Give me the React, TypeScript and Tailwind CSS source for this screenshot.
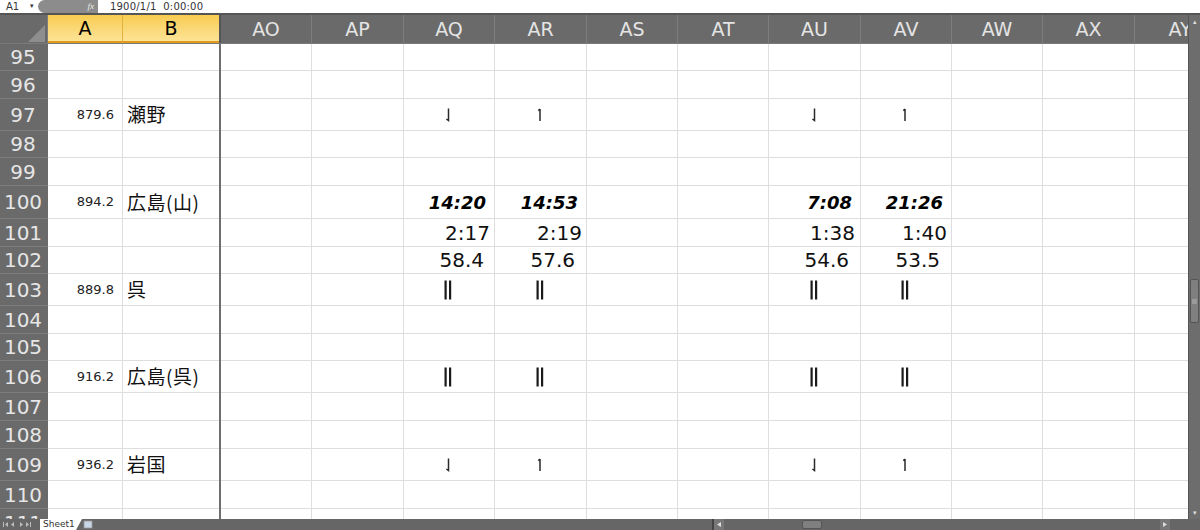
import { Fragment } from "react"

const cols = [
  { name: "AO", w: "w-[91px]" },
  { name: "AP", w: "w-[92px]" },
  { name: "AQ", w: "w-[91px]" },
  { name: "AR", w: "w-[92px]" },
  { name: "AS", w: "w-[91px]" },
  { name: "AT", w: "w-[91px]" },
  { name: "AU", w: "w-[92px]" },
  { name: "AV", w: "w-[91px]" },
  { name: "AW", w: "w-[91px]" },
  { name: "AX", w: "w-[92px]" },
  { name: "AY", w: "w-[91px]" },
]

type Mark = "down" | "up" | "bar"
type Cell = { mark: Mark } | { time: string } | { num: string; pr: string }

type Row = {
  n: number
  h: string
  km?: string
  name?: string
  cells?: Record<string, Cell>
}

const passRow = {
  AQ: { mark: "down" as Mark },
  AR: { mark: "up" as Mark },
  AU: { mark: "down" as Mark },
  AV: { mark: "up" as Mark },
}
const barRow = {
  AQ: { mark: "bar" as Mark },
  AR: { mark: "bar" as Mark },
  AU: { mark: "bar" as Mark },
  AV: { mark: "bar" as Mark },
}

const rows: Row[] = [
  { n: 95, h: "h-[27px]" },
  { n: 96, h: "h-[28px]" },
  { n: 97, h: "h-[32px]", km: "879.6", name: "瀬野", cells: passRow },
  { n: 98, h: "h-[27px]" },
  { n: 99, h: "h-[28px]" },
  {
    n: 100,
    h: "h-[33px]",
    km: "894.2",
    name: "広島(山)",
    cells: { AQ: { time: "14:20" }, AR: { time: "14:53" }, AU: { time: "7:08" }, AV: { time: "21:26" } },
  },
  {
    n: 101,
    h: "h-[28px]",
    cells: {
      AQ: { num: "2:17", pr: "pr-[4px]" },
      AR: { num: "2:19", pr: "pr-[4px]" },
      AU: { num: "1:38", pr: "pr-[5px]" },
      AV: { num: "1:40", pr: "pr-[4px]" },
    },
  },
  {
    n: 102,
    h: "h-[27px]",
    cells: {
      AQ: { num: "58.4", pr: "pr-[10px]" },
      AR: { num: "57.6", pr: "pr-[11px]" },
      AU: { num: "54.6", pr: "pr-[11px]" },
      AV: { num: "53.5", pr: "pr-[11px]" },
    },
  },
  { n: 103, h: "h-[32px]", km: "889.8", name: "呉", cells: barRow },
  { n: 104, h: "h-[28px]" },
  { n: 105, h: "h-[27px]" },
  { n: 106, h: "h-[32px]", km: "916.2", name: "広島(呉)", cells: barRow },
  { n: 107, h: "h-[28px]" },
  { n: 108, h: "h-[28px]" },
  { n: 109, h: "h-[32px]", km: "936.2", name: "岩国", cells: passRow },
  { n: 110, h: "h-[28px]" },
  { n: 111, h: "h-[28px]" },
]

// timetable "pass" marks, drawn as small strokes
function PassMark({ kind }: { kind: Mark }) {
  if (kind === "bar") {
    return (
      <svg width="10" height="20" viewBox="0 0 10 20">
        <rect x="1.5" y="0.5" width="2.2" height="19" fill="#1a1a1a" />
        <rect x="6" y="0.5" width="2.2" height="19" fill="#1a1a1a" />
      </svg>
    )
  }
  return (
    <svg width="8" height="16" viewBox="0 0 8 16">
      {kind === "down" ? (
        <path d="M4.5 1.5 V13.5 L2.4 12" fill="none" stroke="#2a2a2a" strokeWidth="1.5" />
      ) : (
        <path d="M4 2 V14 M4 2.2 L2.3 3.6" fill="none" stroke="#2a2a2a" strokeWidth="1.5" />
      )}
    </svg>
  )
}

function CellBody({ cell }: { cell: Cell }) {
  if ("mark" in cell) {
    return (
      <div className="flex h-full w-full items-center justify-center pr-[2px]">
        <PassMark kind={cell.mark} />
      </div>
    )
  }
  if ("time" in cell) {
    return (
      <div className="flex h-full w-full items-center justify-end pr-[8px] pt-[1px] font-['DejaVu_Sans',sans-serif] text-[18px] font-bold italic text-black">
        {cell.time}
      </div>
    )
  }
  return (
    <div
      className={`flex h-full w-full items-center justify-end ${cell.pr} font-['DejaVu_Sans',sans-serif] text-[20px] text-[#111]`}
    >
      {cell.num}
    </div>
  )
}

function FormulaBar() {
  return (
    <div className="flex h-[13px] items-center bg-white font-['DejaVu_Sans',sans-serif] text-[10px] text-[#333]">
      <span className="w-[30px] pl-[6px]">A1</span>
      <span className="w-[8px] text-[7px]">▾</span>
      <div className="flex h-[13px] w-[60px] items-center justify-end rounded-l-full bg-[#8c8c8c] pr-[4px]">
        <span className="font-['Liberation_Serif',serif] text-[9px] italic text-[#eee]">fx</span>
      </div>
      <span className="pl-[12px] tracking-[0.2px]">1900/1/1&nbsp;&nbsp;0:00:00</span>
    </div>
  )
}

function HeaderRow() {
  return (
    <div className="flex h-[29px] shrink-0 border-b border-[#7a7a7a] bg-[#6a6a6a] font-['DejaVu_Sans',sans-serif] text-[19px]">
      <div className="relative w-[48px] shrink-0 border-r border-[#7d7d7d]">
        <svg className="absolute bottom-[1px] right-[2px]" width="17" height="17" viewBox="0 0 17 17">
          <polygon points="17,0 17,17 0,17" fill="#8e8e8e" />
        </svg>
      </div>
      <div className="flex w-[75px] shrink-0 items-center justify-center border-r border-[#e2b13c] border-b-2 border-b-[#e09a1e] bg-gradient-to-b from-[#f8cc4e] to-[#fde395] text-black">
        A
      </div>
      <div className="flex w-[96px] shrink-0 items-center justify-center border-b-2 border-b-[#e09a1e] bg-gradient-to-b from-[#f8cc4e] to-[#fde395] text-black">
        B
      </div>
      <div className="w-[2px] shrink-0 bg-[#555]" />
      {cols.map((c) => (
        <div
          key={c.name}
          className={`${c.w} flex shrink-0 items-center justify-center border-r border-[#7d7d7d] text-[#e4e4e4]`}
        >
          {c.name}
        </div>
      ))}
    </div>
  )
}

function DataRow({ row }: { row: Row }) {
  return (
    <div className={`flex ${row.h} shrink-0`}>
      <div className="flex w-[48px] shrink-0 items-center justify-center border-b border-[#7d7d7d] bg-[#6a6a6a] pr-[2px] font-['DejaVu_Sans',sans-serif] text-[20px] text-[#e6e6e6]">
        {row.n}
      </div>
      <div className="flex w-[75px] shrink-0 items-center justify-end border-b border-r border-[#dedede] pr-[8px] font-['DejaVu_Sans',sans-serif] text-[13px] text-[#222]">
        {row.km}
      </div>
      <div className="flex w-[96px] shrink-0 items-center border-b border-[#dedede] pl-[4px] font-['Noto_Sans_CJK_JP',sans-serif] text-[19px] tracking-[0.5px] text-[#111]">
        {row.name}
      </div>
      <div className="w-[2px] shrink-0 bg-[#6e6e6e]" />
      {cols.map((c) => {
        const cell = row.cells?.[c.name]
        return (
          <div key={c.name} className={`${c.w} shrink-0 border-b border-r border-[#dedede]`}>
            {cell ? <CellBody cell={cell} /> : null}
          </div>
        )
      })}
    </div>
  )
}

function VScroll() {
  return (
    <div className="flex w-[12px] shrink-0 flex-col border-l border-[#555] bg-[#6d6d6d]">
      <div className="flex h-[14px] items-center justify-center text-[7px] text-[#ddd]">▴</div>
      <div className="h-[250px]" />
      <div className="mx-[1px] flex h-[44px] items-center justify-center rounded-[2px] border border-[#555] bg-[#7f7f7f]">
        <div className="h-[5px] w-[5px] bg-[#9a9a9a]" />
      </div>
      <div className="flex-1" />
      <div className="flex h-[12px] items-center justify-center text-[7px] text-[#ddd]">▾</div>
    </div>
  )
}

function NavArrows() {
  return (
    <svg width="38" height="11" viewBox="0 0 38 11">
      <g fill="#bdbdbd">
        <rect x="3" y="3" width="1" height="5" />
        <polygon points="8,3 8,8 5,5.5" />
        <polygon points="14,3 14,8 11,5.5" />
        <polygon points="20,3 20,8 23,5.5" />
        <polygon points="26,3 26,8 29,5.5" />
        <rect x="30" y="3" width="1" height="5" />
      </g>
    </svg>
  )
}

function BottomBar() {
  return (
    <div className="flex h-[11px] shrink-0 items-stretch bg-[#666] font-['DejaVu_Sans',sans-serif]">
      <NavArrows />
      <div className="ml-[2px] flex w-[36px] items-center bg-white pl-[3px] text-[9px] leading-none text-[#333]">
        Sheet1
      </div>
      <svg width="18" height="11" viewBox="0 0 18 11">
        <polygon points="0,0 6,0 0,11" fill="#fff" />
        <rect x="8" y="2" width="8" height="7" fill="#c9d6e6" stroke="#999" strokeWidth="0.8" />
      </svg>
      <div className="w-[618px]" />
      <div className="w-[2px] bg-[#444]" />
      <svg width="10" height="11" viewBox="0 0 10 11" className="bg-[#777]">
        <polygon points="7,3 7,8 3,5.5" fill="#ddd" />
      </svg>
      <div className="w-[78px]" />
      <div className="my-[1px] w-[20px] rounded-[2px] border border-[#555] bg-[#7f7f7f]" />
      <div className="flex-1" />
      <svg width="10" height="11" viewBox="0 0 10 11" className="bg-[#777]">
        <polygon points="3,3 3,8 7,5.5" fill="#ddd" />
      </svg>
      <div className="w-[30px]" />
    </div>
  )
}

export default function App() {
  return (
    <div className="flex h-[530px] w-[1200px] flex-col overflow-hidden bg-white">
      <FormulaBar />
      <div className="h-[2px] shrink-0 bg-[#555]" />
      <div className="flex min-h-0 flex-1">
        <div className="flex min-w-0 flex-1 flex-col overflow-hidden">
          <HeaderRow />
          {rows.map((r) => (
            <Fragment key={r.n}>
              <DataRow row={r} />
            </Fragment>
          ))}
        </div>
        <VScroll />
      </div>
      <BottomBar />
    </div>
  )
}
